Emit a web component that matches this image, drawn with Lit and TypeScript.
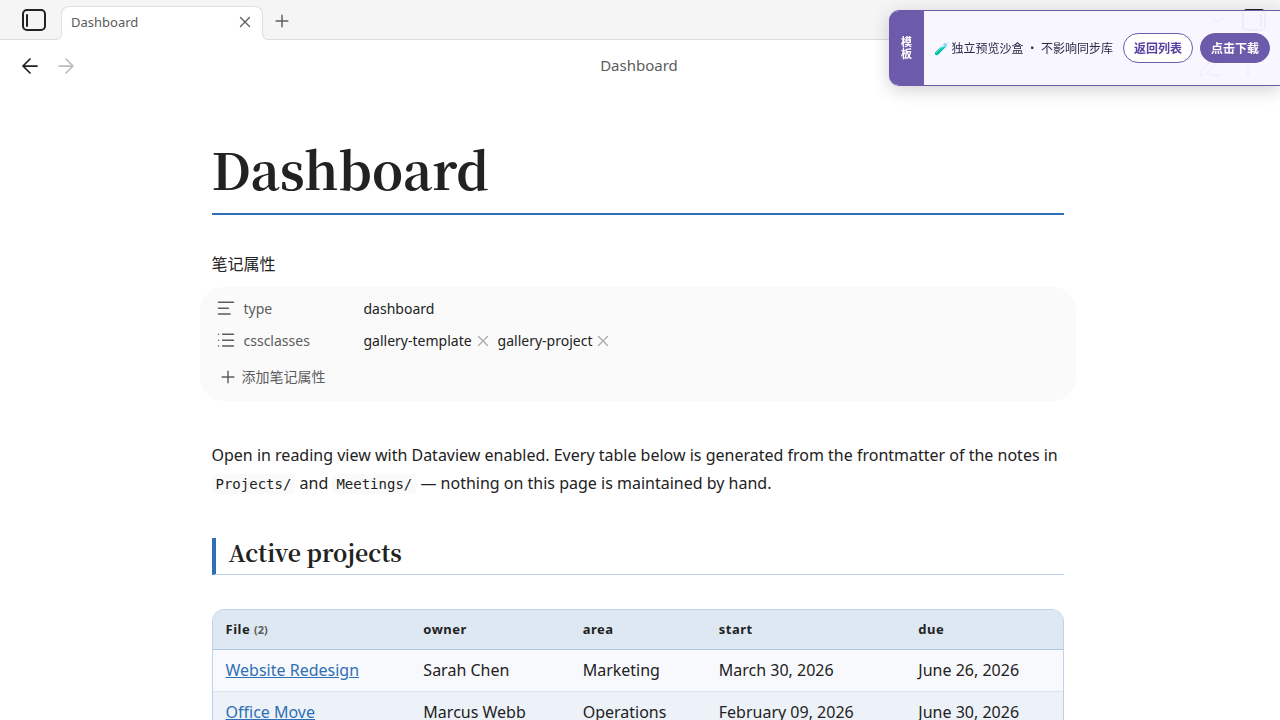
import { LitElement, html, css, svg } from "lit";
import { customElement } from "lit/decorators.js";

const icon = (body: unknown, cls = "") =>
  html`<svg class="icon ${cls}" viewBox="0 0 24 24" aria-hidden="true">${body}</svg>`;

const cross = svg`<path d="M18 6 6 18M6 6l12 12"/>`;
const plus = svg`<path d="M5 12h14M12 5v14"/>`;
const arrowLeft = svg`<path d="m12 19-7-7 7-7M19 12H5"/>`;
const arrowRight = svg`<path d="M5 12h14M12 5l7 7-7 7"/>`;
const textLines = svg`<path d="M3 4h18M3 11h12M3 18h14"/>`;
const list = svg`<path d="M8 4h13M8 11h13M8 18h13M3 4h.01M3 11h.01M3 18h.01"/>`;
const chevron = svg`<path d="m6 9 6 6 6-6"/>`;
const pencil = svg`<path d="M13 21h8M21.2 6.8a1 1 0 0 0-4-4L3.8 16.2a2 2 0 0 0-.5.8L2 21.4a.5.5 0 0 0 .6.6L7 20.7a2 2 0 0 0 .8-.5z"/>`;
const dots = svg`<circle cx="12" cy="5" r="1"/><circle cx="12" cy="12" r="1"/><circle cx="12" cy="19" r="1"/>`;
const panelLeft = svg`<rect x="1" y="2" width="22" height="20" rx="4"/><path d="M5 7v11"/>`;
const panelRight = svg`<rect x="1" y="2" width="22" height="20" rx="4"/><path d="M19 7v11"/>`;

interface Project {
  file: string;
  owner: string;
  area: string;
  start: string;
  due: string;
}

const projects: Project[] = [
  { file: "Website Redesign", owner: "Sarah Chen", area: "Marketing", start: "March 30, 2026", due: "June 26, 2026" },
  { file: "Office Move", owner: "Marcus Webb", area: "Operations", start: "February 09, 2026", due: "June 30, 2026" },
];

const tags = ["gallery-template", "gallery-project"];

@customElement("app-root")
export class AppRoot extends LitElement {
  static styles = css`
    :host {
      display: flex;
      flex-direction: column;
      height: 100vh;
      overflow: hidden;
      background: #fff;
      color: #222;
      font: 16px/28px "Noto Sans", "Noto Sans CJK SC", sans-serif;
    }
    * { box-sizing: border-box; }
    button, input {
      font: inherit;
      color: inherit;
      background: none;
      border: 0;
      padding: 0;
      margin: 0;
    }
    button {
      display: inline-flex;
      align-items: center;
      justify-content: center;
      flex: none;
    }
    .icon {
      display: block;
      width: 20px;
      height: 20px;
      fill: none;
      stroke: currentColor;
      stroke-width: 1.75;
      stroke-linecap: round;
      stroke-linejoin: round;
    }
    .small { width: 18px; height: 18px; }
    .large { width: 24px; height: 24px; }
    .panel { stroke-width: 2; }

    .tabs {
      flex: none;
      display: flex;
      align-items: flex-end;
      height: 40px;
      padding: 0 14px 0 22px;
      background: #f5f5f5;
      border-bottom: 1px solid #dedede;
      color: #5c5c5c;
    }
    .toggle { height: 38px; color: #222; }
    .tab {
      position: relative;
      display: flex;
      align-items: center;
      justify-content: space-between;
      width: 202px;
      height: 34px;
      margin: 0 9px -1px 15px;
      padding: 0 8px 3px 9px;
      background: #fff;
      border: 1px solid #dedede;
      border-bottom: 0;
      border-radius: 8px 8px 0 0;
      font-size: 13px;
    }
    .tab::before, .tab::after {
      content: "";
      position: absolute;
      bottom: 0;
      width: 6px;
      height: 6px;
    }
    .tab::before { left: -6px; background: radial-gradient(circle at 0 0, #f5f5f5 5px, #dedede 5px 6px, #fff 6px); }
    .tab::after { right: -6px; background: radial-gradient(circle at 100% 0, #f5f5f5 5px, #dedede 5px 6px, #fff 6px); }
    .new { height: 37px; }
    .tab-end { display: flex; align-items: center; gap: 14px; height: 39px; margin-left: auto; }

    .bar {
      flex: none;
      display: grid;
      grid-template-columns: 1fr auto 1fr;
      align-items: center;
      height: 52px;
      padding: 0 20px 0 18px;
      color: #5c5c5c;
      font-size: 15px;
    }
    .title { padding-bottom: 2px; }
    .nav { display: flex; gap: 12px; color: #222; }
    .nav button:disabled { color: #bdbdbd; }
    .actions { display: flex; gap: 14px; justify-content: flex-end; }

    .view { flex: 1; min-height: 0; overflow: auto; scrollbar-width: none; padding: 0 37px 0 32px; }
    .note { max-width: 852px; margin: 0 auto; padding: 40px 0 48px; }
    h1, h2 { margin: 0; font-family: "Noto Serif CJK SC", "Source Serif 4", serif; font-weight: 700; }
    h1 {
      padding-bottom: 8px;
      border-bottom: 2px solid #2f6fb3;
      font-size: 50px;
      line-height: 73px;
    }
    .caption { margin-top: 35px; font-size: 16px; line-height: 28px; }
    .props {
      margin: 9px -12px 0;
      padding: 6px 12px 5px 16px;
      border-radius: 24px;
      background: #fafafa;
      font-size: 14px;
    }
    .prop { display: flex; align-items: center; height: 32px; }
    .key { display: flex; align-items: center; gap: 8px; flex: none; width: 148px; color: #5c5c5c; }
    .props input { flex: 1; min-width: 0; height: 28px; }
    .pills { display: flex; flex-wrap: wrap; gap: 6px; }
    .pill { display: flex; align-items: center; gap: 2px; }
    .pill button { color: #ababab; }
    .add { gap: 4px; height: 28px; margin: 6px 0 0 2px; color: #5c5c5c; }

    .intro { margin: 40px 0 41px; }
    code {
      padding: 2px 4px;
      border-radius: 4px;
      background: #fafafa;
      font: 14px "DejaVu Sans Mono", monospace;
    }
    h2 {
      padding: 0 0 6px 13px;
      border-left: 4px solid #2f6fb3;
      border-bottom: 1px solid #bdd4ec;
      font-size: 23px;
      line-height: 30px;
    }
    .frame {
      margin-top: 34px;
      border: 1px solid #bdd2ea;
      border-radius: 12px;
      overflow: hidden;
    }
    table { width: 100%; border-collapse: collapse; text-align: left; }
    th, td { padding: 6px 13px; line-height: 29px; }
    th { padding: 5px 13px; background: #dee8f2; border-bottom: 1px solid #adc8e6; font-size: 13px; letter-spacing: 0.5px; }
    td { border-bottom: 1px solid #dbe5f2; background: #f8f9fd; }
    tr:nth-child(even) td { background: #edf2f9; }
    .count { color: #5c5c5c; font-size: 11px; letter-spacing: 0; }
    a { color: #2f6fb3; }

    .banner {
      position: fixed;
      top: 10px;
      right: 0;
      display: flex;
      align-items: stretch;
      height: 76px;
      border: solid #6c5aab;
      border-width: 1px 0;
      border-radius: 10px 0 0 10px;
      background: rgba(248, 246, 255, 0.96);
      box-shadow: 0 4px 18px rgba(0, 0, 0, 0.18);
      color: #2e2848;
      font-family: "Noto Sans CJK SC", sans-serif;
      font-size: 12px;
      line-height: 12px;
      overflow: hidden;
    }
    .mark {
      display: flex;
      align-items: center;
      justify-content: center;
      width: 35px;
      background: #6c5aab;
      color: #fff;
      font-size: 11px;
      font-weight: 700;
      letter-spacing: 1px;
      writing-mode: vertical-rl;
    }
    .banner-body { display: flex; align-items: center; padding: 0 10px; }
    .banner button {
      height: 30px;
      margin-left: 7px;
      padding: 0 10px;
      border: 1px solid #6c5aab;
      border-radius: 15px;
      background: #fff;
      color: #5641a0;
      font-weight: 700;
    }
    .banner-text { margin-right: 3px; }
    .banner .primary { background: #6c5aab; color: #fff; }
  `;

  render() {
    return html`
      <header class="tabs">
        <button class="toggle" aria-label="Toggle left sidebar">${icon(panelLeft, "large panel")}</button>
        <div class="tab">
          <span>Dashboard</span>
          <button aria-label="Close tab">${icon(cross, "small")}</button>
        </div>
        <button class="new" aria-label="New tab">${icon(plus)}</button>
        <div class="tab-end">
          <button aria-label="Tab list">${icon(chevron)}</button>
          <button class="toggle" aria-label="Toggle right sidebar">${icon(panelRight, "large panel")}</button>
        </div>
      </header>
      <nav class="bar">
        <div class="nav">
          <button aria-label="Back">${icon(arrowLeft, "large")}</button>
          <button aria-label="Forward" disabled>${icon(arrowRight, "large")}</button>
        </div>
        <span class="title">Dashboard</span>
        <div class="actions">
          <button aria-label="Edit">${icon(pencil, "large")}</button>
          <button aria-label="More options">${icon(dots, "large")}</button>
        </div>
      </nav>
      <main class="view">
        <article class="note">
          <h1>Dashboard</h1>
          <div class="caption">笔记属性</div>
          <section class="props" aria-label="笔记属性">
            <div class="prop">
              <label class="key" for="type">${icon(textLines)}type</label>
              <input id="type" type="text" .value=${"dashboard"} />
            </div>
            <div class="prop">
              <span class="key">${icon(list)}cssclasses</span>
              <div class="pills">
                ${tags.map(
                  (t) => html`<span class="pill">${t}<button aria-label="Remove ${t}">${icon(cross, "small")}</button></span>`
                )}
              </div>
            </div>
            <button class="add">${icon(plus)}添加笔记属性</button>
          </section>
          <p class="intro">
            Open in reading view with Dataview enabled. Every table below is generated from the frontmatter of the notes in
            <code>Projects/</code> and <code>Meetings/</code> — nothing on this page is maintained by hand.
          </p>
          <h2>Active projects</h2>
          <div class="frame">
            <table>
              <thead>
                <tr>
                  <th>File <span class="count">(${projects.length})</span></th>
                  <th>owner</th>
                  <th>area</th>
                  <th>start</th>
                  <th>due</th>
                </tr>
              </thead>
              <tbody>
                ${projects.map(
                  (p) => html`<tr>
                    <td><a href="#">${p.file}</a></td>
                    <td>${p.owner}</td>
                    <td>${p.area}</td>
                    <td>${p.start}</td>
                    <td>${p.due}</td>
                  </tr>`
                )}
              </tbody>
            </table>
          </div>
        </article>
      </main>
      <aside class="banner">
        <div class="mark">模板</div>
        <div class="banner-body">
          <span class="banner-text">🧪 独立预览沙盒 · 不影响同步库</span>
          <button>返回列表</button>
          <button class="primary">点击下载</button>
        </div>
      </aside>
    `;
  }
}
